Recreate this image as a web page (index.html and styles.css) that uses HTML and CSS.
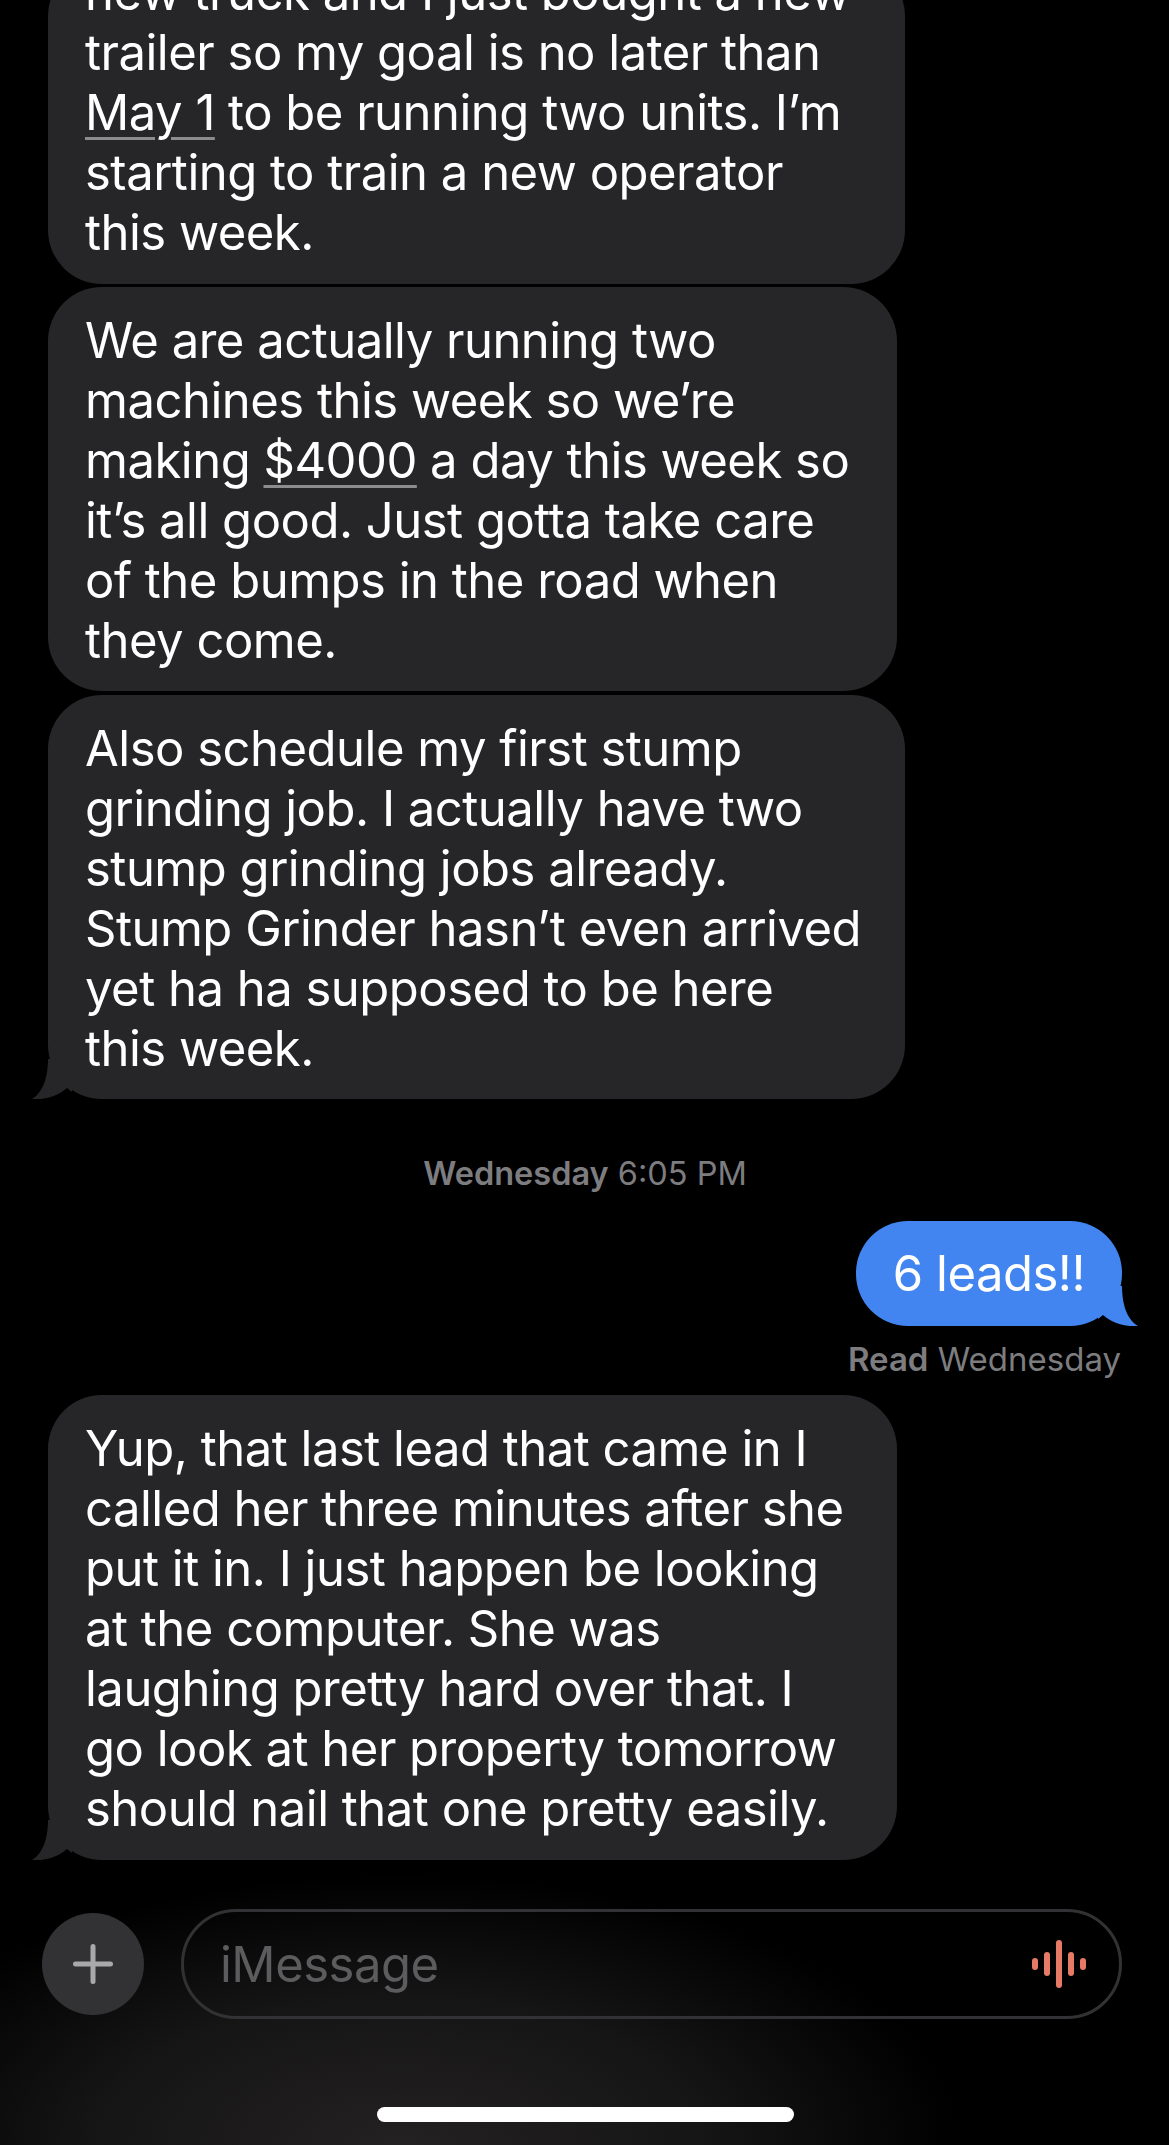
FILE: index.html
```html
<!DOCTYPE html>
<html lang="en">
<head>
  <meta charset="UTF-8">
  <meta name="viewport" content="width=device-width, initial-scale=1.0">
  <title>Messages</title>
  <link rel="stylesheet" href="styles.css">
</head>
<body>
  <div class="thread">
    <div class="bubble wide first">
      new truck and I just bought a new<br>
      trailer so my goal is no later than<br>
      <span class="link">May 1</span> to be running two units. I’m<br>
      starting to train a new operator<br>
      this week.
    </div>
    <div class="bubble">
      We are actually running two<br>
      machines this week so we’re<br>
      making <span class="link">$4000</span> a day this week so<br>
      it’s all good. Just gotta take care<br>
      of the bumps in the road when<br>
      they come.
    </div>
    <div class="bubble wide">
      Also schedule my first stump<br>
      grinding job. I actually have two<br>
      stump grinding jobs already.<br>
      Stump Grinder hasn’t even arrived<br>
      yet ha ha supposed to be here<br>
      this week.
      <svg class="tail" width="40" height="40" viewBox="0 0 40 40"><path d="M16 0C16 16 12 33 0 40C14 41 26 37 35 29L40 33V0Z"/></svg>
    </div>

    <div class="time"><b>Wednesday</b> 6:05 PM</div>

    <div class="sent">
      6 leads!!
      <svg class="tail-sent" width="40" height="40" viewBox="0 0 40 40"><path d="M24 0C24 16 28 33 40 40C26 41 14 37 5 29L0 33V0Z"/></svg>
    </div>
    <div class="read"><b>Read</b> Wednesday</div>

    <div class="bubble">
      Yup, that last lead that came in I<br>
      called her three minutes after she<br>
      put it in. I just happen be looking<br>
      at the computer. She was<br>
      laughing pretty hard over that. I<br>
      go look at her property tomorrow<br>
      should nail that one pretty easily.
      <svg class="tail" width="40" height="40" viewBox="0 0 40 40"><path d="M16 0C16 16 12 33 0 40C14 41 26 37 35 29L40 33V0Z"/></svg>
    </div>
  </div>

  <div class="footer">
    <div class="composer">
      <div class="plus">
        <svg width="40" height="40" viewBox="0 0 40 40"><path d="M20 2.500V37.500M2.500 20H37.500" stroke="#a9a9ab" stroke-width="5" stroke-linecap="round"/></svg>
      </div>
      <div class="input">
        <span>iMessage</span>
        <svg width="54" height="50" viewBox="0 0 54 50"><g stroke="#e57b66" stroke-width="6" stroke-linecap="round"><path d="M3 22V28M15 16V34M27 4V46M39 16V34M51 22V28"/></g></svg>
      </div>
    </div>
    <div class="home-bar"></div>
  </div>
</body>
</html>
```

FILE: styles.css
```css
html, body {
  margin: 0;
  height: 2145px;
  overflow: hidden;
  background: #000;
}

body {
  font-family: Inter, "Liberation Sans", sans-serif;
  display: flex;
  flex-direction: column;
}

.thread {
  display: flex;
  flex-direction: column;
  align-items: flex-start;
  padding: 0 47px 0 48px;
}

.bubble {
  position: relative;
  box-sizing: border-box;
  width: 849px;
  padding: 24px 0 20px 37px;
  margin-bottom: 4px;
  background: #262628;
  border-radius: 54px;
  color: #fff;
  font-size: 49px;
  line-height: 60px;
  letter-spacing: -0.5px;
  white-space: nowrap;
}

.bubble.wide {
  width: 857px;
}

.bubble.first {
  margin-top: -38px;
  padding-top: 1px;
  padding-bottom: 21px;
  margin-bottom: 3px;
}

.bubble:last-child {
  margin-bottom: 0;
  padding-bottom: 21px;
}

.link {
  text-decoration: underline;
  text-decoration-color: #8c8c8e;
  text-decoration-thickness: 3px;
  text-underline-offset: 7px;
}

.tail {
  position: absolute;
  left: -16px;
  bottom: 0;
  fill: #262628;
}

.time {
  align-self: center;
  margin: 53px 0 29px;
  color: #7d7d80;
  font-size: 32.5px;
  line-height: 36px;
}

.time b,
.read b {
  font-weight: 600;
}

.sent {
  position: relative;
  align-self: flex-end;
  box-sizing: border-box;
  height: 105px;
  padding: 0 37px;
  background: #4285f0;
  border-radius: 52px;
  color: #fff;
  font-size: 49px;
  line-height: 105px;
  letter-spacing: -0.5px;
}

.tail-sent {
  position: absolute;
  right: -16px;
  bottom: 0;
  fill: #4285f0;
}

.read {
  align-self: flex-end;
  margin: 15px 1px 18px 0;
  color: #7d7d80;
  font-size: 33px;
  line-height: 36px;
}

.footer {
  flex: 1;
  display: flex;
  flex-direction: column;
  padding: 49px 47px 0 42px;
  background: radial-gradient(ellipse 560px 270px at 400px 100%, #232121 0%, #161515 55%, #000 100%);
}

.composer {
  display: flex;
  align-items: center;
  gap: 37px;
}

.plus {
  flex: none;
  width: 102px;
  height: 102px;
  border-radius: 50%;
  background: #323234;
  display: flex;
  align-items: center;
  justify-content: center;
}

.input {
  flex: 1;
  box-sizing: border-box;
  height: 110px;
  padding: 0 33px 0 36px;
  border: 3px solid #323234;
  border-radius: 55px;
  display: flex;
  align-items: center;
  justify-content: space-between;
  color: #5c5c5e;
  font-size: 49px;
  letter-spacing: -0.5px;
}

.home-bar {
  align-self: center;
  width: 417px;
  height: 15px;
  margin: 88px 0 0 7px;
  border-radius: 8px;
  background: #fff;
}
```
